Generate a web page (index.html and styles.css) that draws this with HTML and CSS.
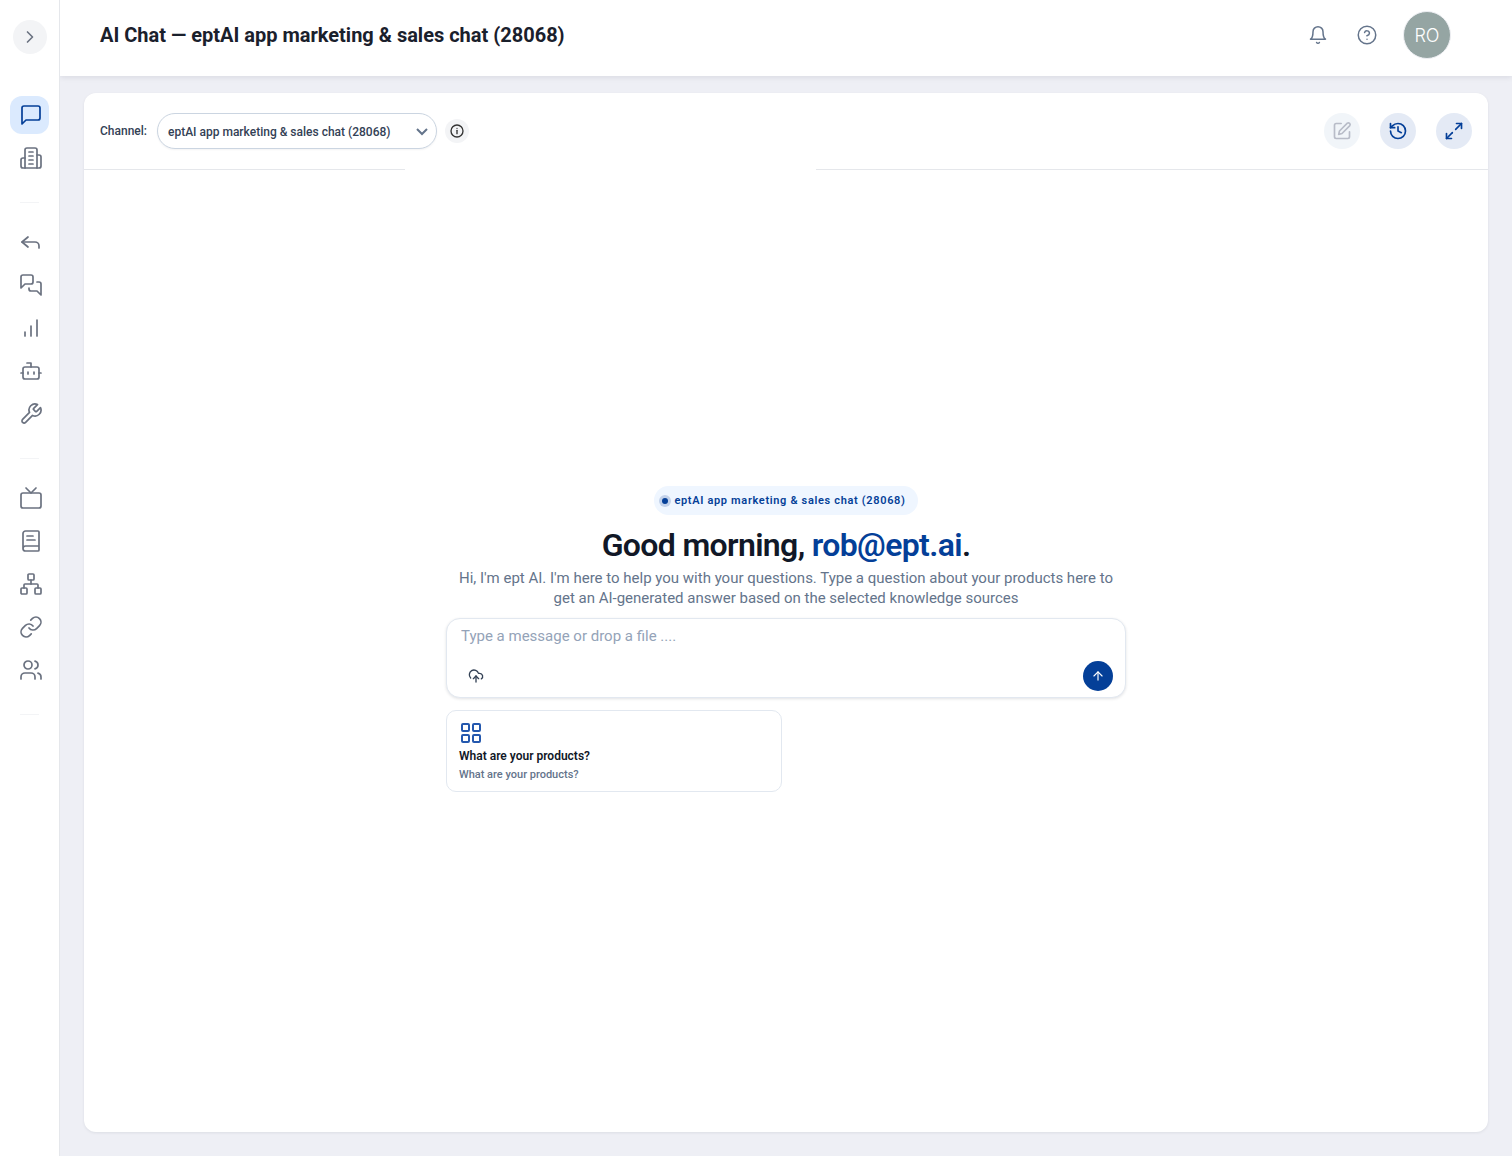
FILE: index.html
```
<!DOCTYPE html>
<html lang="en">

<head>
    <meta charset="UTF-8">
    <meta name="viewport" content="width=device-width, initial-scale=1.0">
    <title>AI Chat</title>
    <link rel="stylesheet" href="styles.css">
</head>

<body>
    <nav class="sidebar" aria-label="Main">
        <button class="sidebar__toggle" type="button" aria-label="Expand menu">
            <svg class="icon icon--md" viewBox="0 0 24 24"><path d="m9 18 6-6-6-6"/></svg>
        </button>
        <div class="sidebar__menu">
            <a class="sidebar__link active" href="#" aria-label="AI Chat">
                <svg class="icon" viewBox="0 0 24 24"><path d="M21 15a2 2 0 0 1-2 2H7l-4 4V5a2 2 0 0 1 2-2h14a2 2 0 0 1 2 2z"/></svg>
            </a>
            <a class="sidebar__link" href="#" aria-label="Company">
                <svg class="icon" viewBox="0 0 24 24"><path d="M6 22V4a2 2 0 0 1 2-2h8a2 2 0 0 1 2 2v18Z"/><path d="M6 12H4a2 2 0 0 0-2 2v6a2 2 0 0 0 2 2h2"/><path d="M18 9h2a2 2 0 0 1 2 2v9a2 2 0 0 1-2 2h-2"/><path d="M10 6h4"/><path d="M10 10h4"/><path d="M10 14h4"/><path d="M10 18h4"/></svg>
            </a>
            <hr>
            <a class="sidebar__link" href="#" aria-label="Replies">
                <svg class="icon" viewBox="0 0 24 24"><path d="m9 17-6-5 6-5"/><path d="M20 18v-2a4 4 0 0 0-4-4H3"/></svg>
            </a>
            <a class="sidebar__link" href="#" aria-label="Conversations">
                <svg class="icon" viewBox="0 0 24 24"><path d="M14 9a2 2 0 0 1-2 2H6l-4 4V4a2 2 0 0 1 2-2h8a2 2 0 0 1 2 2z"/><path d="M18 9h2a2 2 0 0 1 2 2v11l-4-4h-6a2 2 0 0 1-2-2v-1"/></svg>
            </a>
            <a class="sidebar__link" href="#" aria-label="Analytics">
                <svg class="icon" viewBox="0 0 24 24"><path d="M12 20V10"/><path d="M18 20V4"/><path d="M6 20v-4"/></svg>
            </a>
            <a class="sidebar__link" href="#" aria-label="Bots">
                <svg class="icon" viewBox="0 0 24 24"><path d="M12 8V4H8"/><rect width="16" height="12" x="4" y="8" rx="2"/><path d="M2 14h2"/><path d="M20 14h2"/><path d="M15 13v2"/><path d="M9 13v2"/></svg>
            </a>
            <a class="sidebar__link" href="#" aria-label="Tools">
                <svg class="icon" viewBox="0 0 24 24"><path d="M14.7 6.3a1 1 0 0 0 0 1.4l1.6 1.6a1 1 0 0 0 1.4 0l3.77-3.77a6 6 0 0 1-7.94 7.94l-6.91 6.91a2.12 2.12 0 0 1-3-3l6.91-6.91a6 6 0 0 1 7.94-7.94l-3.76 3.76z"/></svg>
            </a>
            <hr>
            <a class="sidebar__link" href="#" aria-label="Channels">
                <svg class="icon" viewBox="0 0 24 24"><rect width="20" height="15" x="2" y="7" rx="2"/><path d="m17 2-5 5-5-5"/></svg>
            </a>
            <a class="sidebar__link" href="#" aria-label="Knowledge">
                <svg class="icon" viewBox="0 0 24 24"><path d="M4 19.5v-15A2.5 2.5 0 0 1 6.500 2H19a1 1 0 0 1 1 1v18a1 1 0 0 1-1 1H6.500a1 1 0 0 1 0-5H20"/><path d="M8 11h8"/><path d="M8 7h6"/></svg>
            </a>
            <a class="sidebar__link" href="#" aria-label="Workflows">
                <svg class="icon" viewBox="0 0 24 24"><rect x="16" y="16" width="6" height="6" rx="1"/><rect x="2" y="16" width="6" height="6" rx="1"/><rect x="9" y="2" width="6" height="6" rx="1"/><path d="M5 16v-3a1 1 0 0 1 1-1h12a1 1 0 0 1 1 1v3"/><path d="M12 12V8"/></svg>
            </a>
            <a class="sidebar__link" href="#" aria-label="Links">
                <svg class="icon" viewBox="0 0 24 24"><path d="M10 13a5 5 0 0 0 7.540.54l3-3a5 5 0 0 0-7.070-7.070l-1.720 1.710"/><path d="M14 11a5 5 0 0 0-7.540-.54l-3 3a5 5 0 0 0 7.070 7.070l1.710-1.710"/></svg>
            </a>
            <a class="sidebar__link" href="#" aria-label="Users">
                <svg class="icon" viewBox="0 0 24 24"><path d="M16 21v-2a4 4 0 0 0-4-4H6a4 4 0 0 0-4 4v2"/><circle cx="9" cy="7" r="4"/><path d="M22 21v-2a4 4 0 0 0-3-3.870"/><path d="M16 3.130a4 4 0 0 1 0 7.750"/></svg>
            </a>
            <hr>
        </div>
    </nav>

    <div class="page">
        <header class="header">
            <h1>AI Chat — eptAI app marketing &amp; sales chat (28068)</h1>
            <div class="header__actions">
                <button class="header__btn" type="button" aria-label="Notifications">
                    <svg class="icon icon--md" viewBox="0 0 24 24"><path d="M6 8a6 6 0 0 1 12 0c0 7 3 9 3 9H3s3-2 3-9"/><path d="M10.300 21a1.940 1.940 0 0 0 3.400 0"/></svg>
                </button>
                <button class="header__btn" type="button" aria-label="Help">
                    <svg class="icon icon--md" viewBox="0 0 24 24"><circle cx="12" cy="12" r="10.500"/><path d="M9.090 9a3 3 0 0 1 5.830 1c0 2-3 3-3 3"/><path d="M12 17h.01"/></svg>
                </button>
                <button class="avatar" type="button">RO</button>
            </div>
        </header>

        <main class="panel">
            <div class="toolbar">
                <label for="channel">Channel:</label>
                <div class="select">
                    <select id="channel">
                        <option>eptAI app marketing &amp; sales chat (28068)</option>
                    </select>
                    <svg class="select__arrow" viewBox="0 0 12 8"><path d="m1 1 5 5 5-5"/></svg>
                </div>
                <button class="info" type="button" aria-label="Channel info">
                    <svg class="icon icon--sm" viewBox="0 0 24 24"><circle cx="12" cy="12" r="9"/><path d="M12 16v-5"/><path d="M12 8h.01"/></svg>
                </button>
                <div class="toolbar__actions">
                    <button class="round" type="button" aria-label="New chat" disabled>
                        <svg class="icon icon--md" viewBox="0 0 24 24"><path d="M11 3H5a2 2 0 0 0-2 2v14a2 2 0 0 0 2 2h14a2 2 0 0 0 2-2v-6"/><path d="M18.400 2.600a2.170 2.170 0 0 1 3 3L12 15l-4 1 1-4Z"/></svg>
                    </button>
                    <button class="round" type="button" aria-label="History">
                        <svg class="icon icon--md" viewBox="0 0 24 24"><path d="M3 12a9 9 0 1 0 9-9 9.750 9.750 0 0 0-6.740 2.740L3 8"/><path d="M3 3v5h5"/><path d="M12 7v5l4 2"/></svg>
                    </button>
                    <button class="round" type="button" aria-label="Full screen">
                        <svg class="icon icon--md" viewBox="0 0 24 24"><path d="M15 3h6v6"/><path d="M9 21H3v-6"/><path d="m21 3-7 7"/><path d="m3 21 7-7"/></svg>
                    </button>
                </div>
            </div>
            <div class="divider"><span></span><span></span></div>

            <section class="welcome">
                <p class="badge"><span class="badge__dot"></span>eptAI app marketing &amp; sales chat (28068)</p>
                <h2>Good morning, <span>rob@ept.ai</span>.</h2>
                <p class="intro">Hi, I'm ept AI. I'm here to help you with your questions. Type a question about your products here to get an AI-generated answer based on the selected knowledge sources</p>
                <form class="composer">
                    <textarea rows="1" aria-label="Message" placeholder="Type a message or drop a file ...."></textarea>
                    <div class="composer__bar">
                        <button class="upload" type="button" aria-label="Upload file">
                            <svg class="icon icon--sm" viewBox="0 0 24 24"><path d="M4 14.900A7 7 0 1 1 15.710 8h1.790a4.500 4.500 0 0 1 2.500 8.240"/><path d="M12 12v9"/><path d="m16 16-4-4-4 4"/></svg>
                        </button>
                        <button class="send" type="submit" aria-label="Send">
                            <svg class="icon icon--xs" viewBox="0 0 24 24"><path d="m5 12 7-7 7 7"/><path d="M12 19V5"/></svg>
                        </button>
                    </div>
                </form>
                <div class="suggestions">
                    <button class="suggestion" type="button">
                        <svg class="icon" viewBox="0 0 24 24"><rect width="7" height="7" x="3" y="3" rx="1"/><rect width="7" height="7" x="14" y="3" rx="1"/><rect width="7" height="7" x="14" y="14" rx="1"/><rect width="7" height="7" x="3" y="14" rx="1"/></svg>
                        <strong>What are your products?</strong>
                        <span>What are your products?</span>
                    </button>
                </div>
            </section>
        </main>
    </div>
</body>

</html>
```
FILE: styles.css
```
* {
  margin: 0;
  padding: 0;
  box-sizing: border-box;
}

body {
  display: flex;
  min-height: 100vh;
  font-family: Roboto, 'Liberation Sans', sans-serif;
  background-color: #eeeff5;
  color: #111827;
}

button {
  display: flex;
  align-items: center;
  justify-content: center;
  border: none;
  background-color: transparent;
  font-family: inherit;
  cursor: pointer;
}

/* Icons */
.icon {
  display: block;
  flex-shrink: 0;
  width: 24px;
  height: 24px;
  fill: none;
  stroke: currentColor;
  stroke-width: 2;
  stroke-linecap: round;
  stroke-linejoin: round;
}

.icon--md {
  width: 20px;
  height: 20px;
}

.icon--sm {
  width: 16px;
  height: 16px;
}

.icon--xs {
  width: 14px;
  height: 14px;
}

/* Sidebar */
.sidebar {
  flex-shrink: 0;
  z-index: 1;
  width: 60px;
  padding-top: 20px;
  border-right: 1px solid #e5e7eb;
  background-color: #ffffff;
  color: #6b7280;
}

.sidebar__toggle {
  width: 34px;
  height: 34px;
  margin-left: 13px;
  border-radius: 50%;
  background-color: #f3f4f6;
  color: #6b7280;
}

.sidebar__menu {
  margin: 42px 10px 0;
}

.sidebar__link {
  display: block;
  margin-bottom: 5px;
  padding: 7px 6px 7px 9px;
  border-radius: 12px;
  color: inherit;
}

.sidebar__link .icon {
  stroke-width: 1.7;
}

.sidebar__link.active {
  background-color: #dbeafe;
  color: #043f98;
}

.sidebar hr {
  margin: 25px 10px 20px;
  border: none;
  border-top: 1px solid #f3f4f6;
}

/* Header */
.page {
  flex: 1;
  display: flex;
  flex-direction: column;
  min-width: 0;
}

.header {
  display: flex;
  justify-content: space-between;
  height: 76px;
  padding: 11px 61px 0 40px;
  background-color: #ffffff;
  box-shadow: 0 1px 6px rgba(15, 23, 42, 0.1);
}

.header h1 {
  font-size: 20px;
  line-height: 48px;
  font-weight: 700;
  color: #1a202c;
}

.header__actions {
  display: flex;
  align-items: center;
  height: 48px;
}

.header__btn {
  width: 20px;
  height: 20px;
  margin-right: 29px;
  color: #64748b;
}

.header__btn + .header__btn {
  margin-right: 26px;
}

.header__btn .icon {
  stroke-width: 1.8;
}

.avatar {
  width: 48px;
  height: 48px;
  border: 1px solid #eeeff3;
  border-radius: 50%;
  background-color: #95a5a3;
  color: #ffffff;
  font-family: Inter, sans-serif;
  font-size: 18px;
  font-weight: 300;
}

/* Panel */
.panel {
  flex: 1;
  display: flex;
  flex-direction: column;
  margin: 17px 24px 24px;
  border-radius: 12px;
  background-color: #ffffff;
  box-shadow: 0 1px 3px rgba(15, 23, 42, 0.08);
}

.toolbar {
  display: flex;
  align-items: center;
  height: 76px;
  padding: 0 16px;
}

.toolbar label {
  margin-right: 10px;
  font-size: 12px;
  font-weight: 500;
  color: #334155;
}

.select {
  position: relative;
  width: 280px;
}

.select select {
  appearance: none;
  display: block;
  width: 100%;
  height: 36px;
  padding: 2px 30px 0 10px;
  border: 1px solid #cbd5e1;
  border-radius: 18px;
  background-color: #ffffff;
  box-shadow: 0 1px 2px rgba(15, 23, 42, 0.05);
  color: #334155;
  font-family: inherit;
  font-size: 12px;
  font-weight: 500;
}

.select__arrow {
  position: absolute;
  top: 15px;
  right: 9px;
  width: 12px;
  height: 8px;
  fill: none;
  stroke: #64748b;
  stroke-width: 2;
  pointer-events: none;
}

.info {
  width: 24px;
  height: 24px;
  margin-left: 8px;
  border-radius: 50%;
  background-color: #f3f4f6;
  color: #333333;
}

.toolbar__actions {
  display: flex;
  gap: 20px;
  margin-left: auto;
}

.round {
  width: 36px;
  height: 36px;
  border-radius: 50%;
  background-color: #e4eaf5;
  color: #043f98;
}

.round:disabled {
  background-color: #f1f5f9;
  color: #b8bcc8;
  cursor: default;
}

.divider {
  display: flex;
  gap: 411px;
}

.divider span {
  flex: 1;
  height: 1px;
  background-color: #e5e7eb;
}

.divider span:first-child {
  flex: none;
  width: 321px;
}

/* Welcome */
.welcome {
  flex: 1;
  display: flex;
  flex-direction: column;
  justify-content: center;
  align-items: center;
  width: 100%;
  max-width: 680px;
  margin: 0 auto;
  padding-bottom: 24px;
}

.badge {
  display: flex;
  align-items: center;
  height: 29px;
  padding: 0 12px 0 8px;
  border-radius: 15px;
  background-color: #eff6ff;
  color: #043f98;
  font-size: 11px;
  font-weight: 600;
  letter-spacing: 0.06em;
}

.badge__dot {
  width: 6px;
  height: 6px;
  margin-right: 6px;
  border-radius: 50%;
  background-color: #043f98;
  box-shadow: 0 0 0 3px #c2d1ea;
}

.welcome h2 {
  margin-top: 10px;
  font-size: 32px;
  line-height: 40px;
  font-weight: 600;
  letter-spacing: -0.02em;
}

.welcome h2 span {
  color: #043f98;
}

.intro {
  max-width: 660px;
  margin: 3px 0 10px;
  font-size: 15px;
  line-height: 20px;
  text-align: center;
  color: #64748b;
}

.composer {
  width: 100%;
  height: 80px;
  padding: 7px 12px 6px 14px;
  border: 1px solid #e2e8f0;
  border-radius: 14px;
  background-color: #ffffff;
  box-shadow: 0 1px 3px rgba(15, 23, 42, 0.12);
}

.composer textarea {
  display: block;
  width: 100%;
  height: 35px;
  border: none;
  outline: none;
  resize: none;
  font-family: inherit;
  font-size: 15px;
  line-height: 20px;
  color: #111827;
}

.composer textarea::placeholder {
  color: #94a3b8;
}

.composer__bar {
  display: flex;
  justify-content: space-between;
}

.upload {
  width: 30px;
  height: 30px;
  color: #334155;
}

.send {
  width: 30px;
  height: 30px;
  border-radius: 50%;
  background-color: #043f98;
  color: #ffffff;
}

.suggestions {
  display: grid;
  grid-template-columns: 1fr 1fr;
  gap: 8px;
  width: 100%;
  margin-top: 12px;
}

.suggestion {
  flex-direction: column;
  align-items: flex-start;
  height: 82px;
  padding: 2px 12px 0;
  border: 1px solid #e2e8f0;
  border-radius: 10px;
  background-color: #ffffff;
  text-align: left;
}

.suggestion .icon {
  stroke: #2458ae;
}

.suggestion strong {
  margin: 2px 0;
  font-size: 12px;
  line-height: 18px;
  font-weight: 600;
  color: #111827;
}

.suggestion span {
  font-size: 11px;
  line-height: 16px;
  font-weight: 500;
  color: #64748b;
}
```
